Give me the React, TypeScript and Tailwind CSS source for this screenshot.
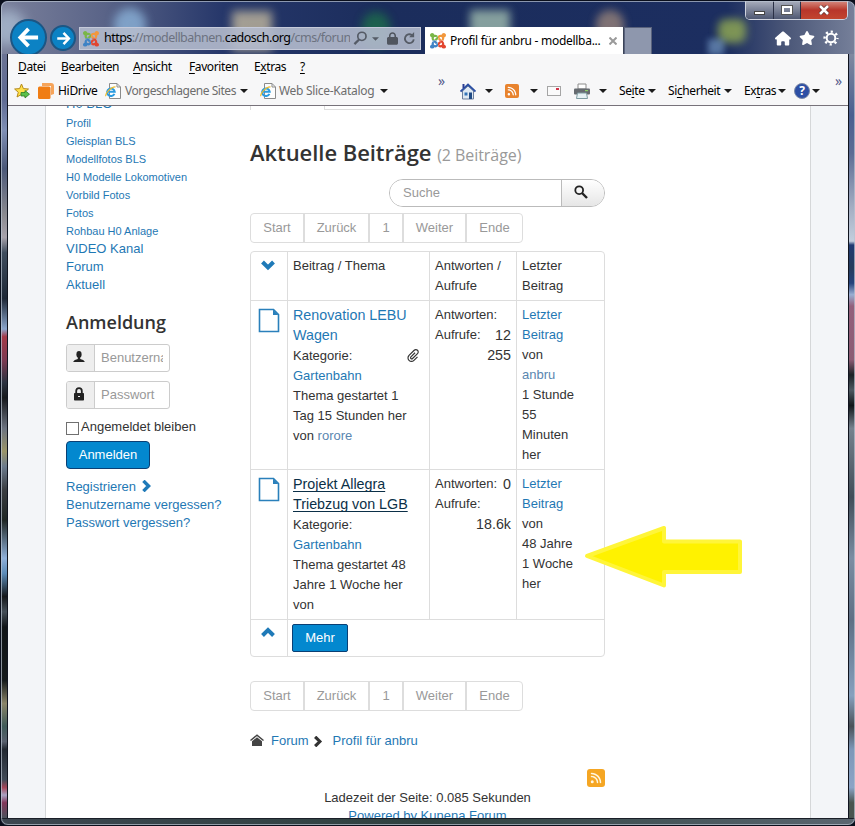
import type { ReactNode } from 'react'
import { FaLock, FaRss, FaStar, FaHouse } from 'react-icons/fa6'
import { ImAttachment } from 'react-icons/im'
import { SiJoomla } from 'react-icons/si'

const subLinks = [
  'Profil',
  'Gleisplan BLS',
  'Modellfotos BLS',
  'H0 Modelle Lokomotiven',
  'Vorbild Fotos',
  'Fotos',
  'Rohbau H0 Anlage',
]

const sideStripLeft =
  'bg-[linear-gradient(180deg,#6b7394_0%,#5f6b93_6%,#7f8fb5_10%,#4b5878_15%,#8a8a90_21%,#a7a2ab_24%,#3f4d5e_26%,#1d2736_32%,#8aa5cc_36%,#a33a48_37%,#7d3a52_40%,#2b3240_43%,#16181c_45%,#6b7280_49%,#9a9468_52%,#6b7a8c_54%,#3a3d42_57%,#1f2624_61%,#8fb0da_66%,#5b8bb8_68%,#14171a_71%,#444e58_73%,#101417_75%,#151a1b_82%,#8a8468_85%,#3f5a58_88%,#59606e_90%,#222831_91%,#414a57_95%,#a34558_96%,#a9a3c4_97%,#82375a_98%,#4a525c_100%)]'
const sideStripRight =
  'bg-[linear-gradient(180deg,#8089a0_0%,#4a5f90_8%,#5c6c94_13%,#a3adc2_20%,#c3cedd_24.5%,#203a72_25%,#263c5c_28%,#25437c_30%,#9aaed2_31.5%,#93607c_33%,#8c5c74_40%,#1b2226_42%,#4d5860_44%,#101619_46%,#76828e_49%,#414d58_58%,#7b8da3_66%,#5f6f84_74%,#86a0be_84%,#4b5259_88%,#7e97b8_91%,#8ba4c6_96%,#49544f_98%)]'

function Joomla() {
  return (
    <div className="grid h-4 w-4 shrink-0 *:col-start-1 *:row-start-1 *:h-4 *:w-4">
      <SiJoomla className="text-[#7ab648] [clip-path:polygon(0_0,50%_0,50%_50%,0_50%)]" />
      <SiJoomla className="text-[#f2973c] [clip-path:polygon(50%_0,100%_0,100%_50%,50%_50%)]" />
      <SiJoomla className="text-[#3f83c5] [clip-path:polygon(0_50%,50%_50%,50%_100%,0_100%)]" />
      <SiJoomla className="text-[#e2452f] [clip-path:polygon(50%_50%,100%_50%,100%_100%,50%_100%)]" />
    </div>
  )
}

function Arrow({ className }: { className?: string }) {
  return (
    <svg viewBox="0 0 24 24" className={className} fill="none" stroke="#fff" strokeWidth="4">
      <path d="M22 12 H4" />
      <path d="M12 3 L3.5 12 L12 21" />
    </svg>
  )
}

function Caret({ className = '' }: { className?: string }) {
  return (
    <svg viewBox="0 0 8 4" className={`h-1 w-2 shrink-0 ${className}`}>
      <path d="M0 0 H8 L4 4 Z" fill="#1b1b1b" />
    </svg>
  )
}

function IePage() {
  return (
    <svg viewBox="0 0 16 16" className="h-4 w-4 shrink-0">
      <path d="M4.5 .5 H12 L15.5 4 V15.5 H4.5 Z" fill="#fdfdfd" stroke="#8b8b8b" />
      <path d="M12 .5 V4 H15.5" fill="none" stroke="#8b8b8b" />
      <path d="M9.4 10.8 A3.8 3.8 0 1 1 9.7 8.7 H3" fill="none" stroke="#2b9be0" strokeWidth="2" />
      <path d="M1 13.2 C-.5 11 6 3.5 10.5 3.8" fill="none" stroke="#eebd2e" strokeWidth="1.2" />
    </svg>
  )
}

function Chevron({ d, className }: { d: string; className: string }) {
  return (
    <svg viewBox="0 0 14 14" className={className} fill="none" stroke="currentColor" strokeWidth="4">
      <path d={d} />
    </svg>
  )
}

function PageIcon() {
  return (
    <svg viewBox="0 0 22 25" className="h-[25px] w-[22px]">
      <path d="M1.5 1.5 H15.5 L20.5 6.5 V23.5 H1.5 Z" fill="#fff" stroke="#2a80bb" strokeWidth="1.6" />
      <path d="M15 1.5 V7 H20.5 Z" fill="#2a80bb" />
    </svg>
  )
}

function TitleBar() {
  return (
    <div className="relative flex h-[54px] shrink-0 overflow-hidden">
      <div className="absolute left-[-10px] top-[10px] h-9 w-9 rounded-full bg-[#b9cde0] opacity-60 blur-[6px]" />
      <div className="absolute left-[114px] top-[8px] h-9 w-8 rounded-full bg-[#8fb8de] opacity-75 blur-[5px]" />
      <div className="absolute left-[232px] top-[11px] h-10 w-10 bg-[#d9cba6] opacity-70 blur-[5px]" />
      <div className="absolute left-[362px] top-[12px] h-9 w-7 rounded-full bg-[#1d6a4c] opacity-85 blur-[5px]" />
      <div className="absolute left-[470px] top-[10px] h-9 w-10 bg-[#a9c6b4] opacity-75 blur-[4px]" />
      <div className="absolute left-[596px] top-[10px] h-8 w-7 rounded-full bg-[#a0897c] opacity-75 blur-[4px]" />
      <div className="absolute left-[718px] top-[19px] h-6 w-7 rounded-lg bg-[#9cb552] opacity-75 blur-[4px]" />
      <div className="absolute left-[708px] top-[39px] h-4 w-4 bg-[#7fa6cf] opacity-60 blur-[3px]" />

      <div className="relative flex grow items-end">
        <div className="ml-[10px] flex h-[35px] w-[37px] items-start overflow-hidden">
          <div className="flex h-[37px] w-[37px] shrink-0 items-center justify-center rounded-full border-2 border-[#1c5684] bg-[#0c82c4]">
            <Arrow className="h-[23px] w-[23px]" />
          </div>
        </div>
        <div className="mb-[3px] ml-[3px] flex h-[26px] w-[26px] items-center justify-center rounded-full border-2 border-[#1c5684] bg-[#0c82c4]">
          <Arrow className="h-[15px] w-[15px] rotate-180" />
        </div>
        <div className="mb-[4px] ml-[3px] flex h-[23px] w-[342px] items-center border border-[#c5cada] bg-[#b4bbcd]/90 pl-[3px]">
          <Joomla />
          <div className="ml-[5px] w-[246px] overflow-hidden whitespace-nowrap text-[12.5px] tracking-[-0.53px] text-[#6c7280]">
            <span className="text-black">https</span>://modellbahnen.<span className="text-black">cadosch.org</span>
            /cms/forun
          </div>
          <svg viewBox="0 0 16 16" className="ml-[3px] h-[15px] w-[15px] shrink-0" fill="none" stroke="#555b66" strokeWidth="1.8">
            <circle cx="9.5" cy="5.7" r="4.4" />
            <path d="M6.5 9 L1.5 14" strokeWidth="2.4" />
          </svg>
          <svg viewBox="0 0 8 4" className="ml-[4px] h-1 w-[7px] shrink-0">
            <path d="M0 0 H8 L4 4 Z" fill="#555b66" />
          </svg>
          <FaLock className="ml-[8px] h-[13px] w-[11px] shrink-0 text-[#50555f]" />
          <svg viewBox="0 0 14 14" className="ml-[5px] h-[13px] w-[13px] shrink-0" fill="none" stroke="#555b66" strokeWidth="2">
            <path d="M11.6 8 A4.8 4.8 0 1 1 9.5 3.2" />
            <path d="M12 0 V5.6 H6.6 Z" fill="#555b66" stroke="none" />
          </svg>
        </div>
        <div className="ml-[4px] flex h-[27px] w-[199px] items-center border-r border-[#3c4458] bg-white pl-[5px]">
          <Joomla />
          <span className="ml-[4px] w-[159px] whitespace-nowrap text-[12px] tracking-[-0.28px] text-black">
            Profil für anbru - modellba...
          </span>
          <svg viewBox="0 0 8 8" className="h-2 w-2" stroke="#9a9a9a" strokeWidth="2">
            <path d="M.5 .5 L7.5 7.5 M7.5 .5 L.5 7.5" />
          </svg>
        </div>
        <div className="h-[27px] w-[28px] border border-b-0 border-[#59627c] bg-[#8e97ad]" />
      </div>

      <div className="relative flex w-[110px] flex-col items-end pr-[7px]">
        <div className="mt-px flex h-[19px] w-[103px] overflow-hidden rounded-b-[5px] border border-t-0 border-[#cfd3de]">
          <div className="flex w-[28px] items-center justify-center border-r border-[#2a3045] bg-linear-to-b from-[#a9aebd] to-[#4f5872]">
            <div className="mt-[5px] h-[4px] w-[11px] border border-[#444] bg-white" />
          </div>
          <div className="flex w-[27px] items-center justify-center border-r border-[#2a3045] bg-linear-to-b from-[#a9aebd] to-[#4f5872]">
            <div className="h-[8px] w-[10px] border-2 border-white outline outline-[#555]" />
          </div>
          <div className="flex grow items-center justify-center bg-linear-to-b from-[#d58a80] via-[#b8352a] to-[#c2452f]">
            <svg viewBox="0 0 12 10" className="h-[10px] w-[12px]">
              <path d="M2 1 L10 9 M10 1 L2 9" stroke="#5b2a2a" strokeWidth="4" />
              <path d="M2 1 L10 9 M10 1 L2 9" stroke="#fff" strokeWidth="2.6" />
            </svg>
          </div>
        </div>
        <div className="mt-[10px] flex items-center gap-[8px] pr-[9px] text-white">
          <FaHouse className="h-[15px] w-[16px]" />
          <FaStar className="h-[16px] w-[16px]" />
          <svg viewBox="0 0 16 16" className="h-4 w-4" fill="none" stroke="#fff">
            <circle cx="8" cy="8" r="4.3" strokeWidth="2" />
            <circle cx="8" cy="8" r="6.4" strokeWidth="2.4" strokeDasharray="2.2 2.827" strokeDashoffset="1.1" />
          </svg>
        </div>
      </div>
    </div>
  )
}

function Label({ before = '', hot, after, className }: { before?: string; hot: string; after: string; className: string }) {
  return (
    <span className={`shrink-0 whitespace-nowrap ${className}`}>
      {before}
      <span className="underline underline-offset-2">{hot}</span>
      {after}
    </span>
  )
}

function Toolbars() {
  return (
    <div className="flex h-[52px] shrink-0 flex-col border-b border-[#77727a] bg-[#f7f7f8] text-[12px] tracking-[-0.4px] text-black">
      <div className="flex h-[25px] items-center pl-[10px]">
        <Label className="w-[43px]" hot="D" after="atei" />
        <Label className="w-[72px]" hot="B" after="earbeiten" />
        <Label className="w-[56px]" hot="A" after="nsicht" />
        <Label className="w-[65px]" hot="F" after="avoriten" />
        <Label className="w-[46px]" before="E" hot="x" after="tras" />
        <Label className="w-4" hot="?" after="" />
      </div>
      <div className="flex h-[24px] items-center pl-[6px]">
        <svg viewBox="0 0 16 16" className="h-4 w-4 shrink-0">
          <path d="M7.5 1 L9.4 5.6 L14.5 6 L10.7 9.3 L12 14 L7.5 11.4 L3 14 L4.3 9.3 L.6 6 L5.6 5.6 Z" fill="#ffe04a" stroke="#b58a1c" />
          <path d="M7 9.5 H11 V7.5 L15.5 11.2 L11 15 V13 H7 Z" fill="#5cc04a" stroke="#2c7d28" strokeWidth=".8" />
        </svg>
        <svg viewBox="0 0 16 16" className="ml-[8px] h-4 w-4 shrink-0">
          <path d="M4 0 H13 Q16 0 16 3 V11 L13 12 V3 H4 Z" fill="#f6a45a" />
          <rect x="0" y="3.5" width="12.5" height="12.5" rx="1.5" fill="#f07d14" />
        </svg>
        <span className="ml-[4px] w-[47px] shrink-0 tracking-[-0.3px]">HiDrive</span>
        <IePage />
        <span className="ml-[4px] w-[115px] shrink-0 whitespace-nowrap tracking-[-0.45px] text-[#6d6d6d]">Vorgeschlagene Sites</span>
        <Caret />
        <div className="w-[12px] shrink-0" />
        <IePage />
        <span className="ml-[3px] w-[101px] shrink-0 whitespace-nowrap tracking-[-0.3px] text-[#6d6d6d]">Web Slice-Katalog</span>
        <Caret />
        <span className="mb-[20px] ml-[50px] w-[22px] shrink-0 text-[14px] leading-none text-[#555a8a]">»</span>
        <svg viewBox="0 0 16 17" className="h-[17px] w-4 shrink-0">
          <path d="M2.5 8 V16 H13.5 V8 L8 3 Z" fill="#dfe9f3" stroke="#6d7f9d" />
          <path d="M.5 8.5 L8 1.5 L15.5 8.5" fill="none" stroke="#2b4fa3" strokeWidth="1.8" />
          <rect x="2.5" y="1" width="2" height="4" fill="#2b3e94" />
          <rect x="4.5" y="9.5" width="3" height="3" fill="#3474b8" />
          <rect x="9" y="9.5" width="3" height="6.5" fill="#1f4a84" />
        </svg>
        <Caret className="ml-[9px]" />
        <div className="ml-[12px] flex h-[14px] w-[14px] shrink-0 items-center justify-center rounded-[2px] bg-[#e8832e]">
          <FaRss className="h-[10px] w-[10px] text-white" />
        </div>
        <Caret className="ml-[11px]" />
        <div className="ml-[9px] flex h-[10px] w-[14px] shrink-0 justify-end border border-[#a5a5a5] bg-[#fafafa] pr-px pt-px">
          <div className="h-[2px] w-[3px] bg-[#d2344a]" />
        </div>
        <svg viewBox="0 0 16 16" className="ml-[13px] h-4 w-4 shrink-0">
          <path d="M4 1 H12 V6 H4 Z" fill="#fff" stroke="#8c8c8c" />
          <rect x="0" y="5.5" width="16" height="6" rx="1" fill="#666b70" />
          <rect x="11" y="7" width="3" height="1.2" fill="#8ed06a" />
          <path d="M3.5 10 H12.5 L13.5 15.5 H2.5 Z" fill="#e6f1f4" stroke="#7d9aa0" />
        </svg>
        <Caret className="ml-[9px]" />
        <Label className="ml-[12px] w-[28px]" before="Se" hot="i" after="te" />
        <Caret className="ml-px" />
        <Label className="ml-[12px] w-[55px]" before="Si" hot="c" after="herheit" />
        <Caret className="ml-px" />
        <Label className="ml-[12px] w-[33px]" before="Ex" hot="t" after="ras" />
        <Caret className="ml-px" />
        <div className="ml-[8px] flex h-4 w-4 shrink-0 items-center justify-center rounded-full border border-[#7c8aa8] bg-[#2d4fa5] text-[12px] font-bold leading-none text-white">
          ?
        </div>
        <Caret className="ml-[2px]" />
        <span className="mb-[20px] ml-[15px] shrink-0 text-[14px] leading-none text-[#555a8a]">»</span>
      </div>
    </div>
  )
}

function LoginField({ icon, placeholder, className }: { icon: ReactNode; placeholder: string; className: string }) {
  return (
    <div className={`flex h-[28px] w-[104px] overflow-hidden rounded-[3px] border border-[#ccc] ${className}`}>
      <div className="flex w-[28px] shrink-0 items-center justify-center border-r border-[#ccc] bg-[#eee] pr-1 text-[#222]">{icon}</div>
      <input
        placeholder={placeholder}
        className="mx-[6px] min-w-0 grow bg-white text-[13px] text-[#555] outline-none placeholder:text-[#999]"
      />
    </div>
  )
}

function Sidebar() {
  return (
    <div className="w-[204px] shrink-0 pl-[20px] text-[13px] leading-[18px] text-[#1f78b4]">
      <div className="mt-[-11px]">H0 BLO</div>
      {subLinks.map((label) => (
        <div key={label} className="h-[18px] whitespace-nowrap pt-px text-[11px]">
          {label}
        </div>
      ))}
      <div className="mt-px">VIDEO Kanal</div>
      <div>Forum</div>
      <div>Aktuell</div>

      <h3 className="mt-[18px] font-['Open_Sans',sans-serif] text-[18px] font-semibold leading-[20px] text-[#333]">Anmeldung</h3>
      <LoginField
        className="mt-[12px]"
        placeholder="Benutzername"
        icon={
          <svg viewBox="0 0 12 12" className="mb-[3px] h-3 w-3" fill="currentColor">
            <ellipse cx="6" cy="3.4" rx="2.6" ry="3.3" />
            <path d="M4.8 6 H7.2 V8 C9 8.8 11.6 9.2 11.8 11 H.2 C.4 9.2 3 8.8 4.8 8 Z" />
          </svg>
        }
      />
      <LoginField
        className="mt-[9px]"
        placeholder="Passwort"
        icon={
          <svg viewBox="0 0 12 14" className="mb-[3px] h-[14px] w-[12px]">
            <path d="M3.2 7 V4 Q3.2 1.2 6 1.2 Q8.8 1.2 8.8 4 V7" fill="none" stroke="currentColor" strokeWidth="1.8" />
            <rect x="1" y="6" width="10" height="7.5" rx=".8" fill="currentColor" />
            <rect x="5" y="9" width="2" height="1" fill="#eee" />
          </svg>
        }
      />
      <label className="mt-[9px] flex h-[18px] items-center text-[#333]">
        <span className="mt-[3px] mr-[2px] h-[13px] w-[13px] border border-[#707070] bg-white" />
        Angemeldet bleiben
      </label>
      <button className="mt-[5px] block h-[28px] w-[84px] rounded-[4px] border border-[#0a3f74] bg-[#0388cf] text-white">
        Anmelden
      </button>
      <div className="mt-[9px] flex items-center">
        Registrieren
        <Chevron className="mb-[2px] ml-[4px] h-[12px] w-[12px] text-[#1f7ab8]" d="M4 1 L10 7 L4 13" />
      </div>
      <div>Benutzername vergessen?</div>
      <div>Passwort vergessen?</div>
    </div>
  )
}

function Pagination() {
  const cell = 'flex items-center justify-center border-r-2 border-[#ddd]'
  return (
    <div className="flex h-[30px] w-[273px] rounded-[4px] border border-[#ddd] text-[13px] text-[#999]">
      <div className={`${cell} w-[54px]`}>Start</div>
      <div className={`${cell} w-[65px]`}>Zurück</div>
      <div className={`${cell} w-[34px]`}>1</div>
      <div className={`${cell} w-[63px]`}>Weiter</div>
      <div className="flex grow items-center justify-center">Ende</div>
    </div>
  )
}

const link = 'text-[#1f78b4]'
const user = 'text-[#5a86b0]'

function TopicTable() {
  return (
    <div className="grid w-[355px] grid-cols-[36px_142px_87px_88px] grid-rows-[48px_169px_150px_37px] overflow-hidden rounded-[4px] border border-[#ddd] text-[13px] leading-[20px] text-[#333] *:border-[#ddd]">
      <div className="pl-[10px] pt-[6px]">
        <Chevron className="h-[14px] w-[14px] text-[#1f7ab8]" d="M1.5 4 L7 9.5 L12.5 4" />
      </div>
      <div className="border-l pl-[5px] pt-[4px]">Beitrag / Thema</div>
      <div className="border-l pl-[5px] pt-[4px]">
        Antworten /<br />
        Aufrufe
      </div>
      <div className="border-l pl-[5px] pt-[4px]">
        Letzter
        <br />
        Beitrag
      </div>

      <div className="border-t pl-[7px] pt-[7px]">
        <PageIcon />
      </div>
      <div className="border-l border-t pl-[5px] pt-[4px]">
        <div className={`${link} mb-px text-[14.3px]`}>
          Renovation LEBU
          <br />
          Wagen
        </div>
        <div className="flex items-center justify-between pr-[9px]">
          Kategorie: <ImAttachment className="mb-[2px] h-[13px] w-[13px]" />
        </div>
        <div className={link}>Gartenbahn</div>
        Thema gestartet 1<br />
        Tag 15 Stunden her
        <br />
        von <span className={user}>rorore</span>
      </div>
      <div className="border-l border-t pl-[5px] pr-[5px] pt-[4px]">
        Antworten:
        <div className="flex justify-between">
          Aufrufe: <span className="text-[14.3px]">12</span>
        </div>
        <div className="text-right text-[14.3px]">255</div>
      </div>
      <div className="border-l border-t pl-[5px] pt-[4px]">
        <div className={link}>
          Letzter
          <br />
          Beitrag
        </div>
        von
        <div className={user}>anbru</div>
        1 Stunde
        <br />
        55
        <br />
        Minuten
        <br />
        her
      </div>

      <div className="border-t pl-[7px] pt-[7px]">
        <PageIcon />
      </div>
      <div className="border-l border-t pl-[5px] pt-[4px]">
        <div className="mb-px text-[14.3px] text-[#0b2f47] underline decoration-1 underline-offset-[2px] [text-decoration-skip-ink:none]">
          Projekt Allegra
          <br />
          Triebzug von LGB
        </div>
        Kategorie:
        <div className={link}>Gartenbahn</div>
        Thema gestartet 48
        <br />
        Jahre 1 Woche her
        <br />
        von
      </div>
      <div className="border-l border-t pl-[5px] pr-[5px] pt-[4px]">
        <div className="flex justify-between">
          Antworten: <span className="text-[14.3px]">0</span>
        </div>
        Aufrufe:
        <div className="text-right text-[14.3px]">18.6k</div>
      </div>
      <div className="border-l border-t pl-[5px] pt-[4px]">
        <div className={link}>
          Letzter
          <br />
          Beitrag
        </div>
        von
        <br />
        48 Jahre
        <br />
        1 Woche
        <br />
        her
      </div>

      <div className="border-t pl-[10px] pt-[6px]">
        <Chevron className="h-[14px] w-[14px] text-[#1f7ab8]" d="M1.5 9.5 L7 4 L12.5 9.5" />
      </div>
      <div className="col-span-3 border-l border-t pl-[4px] pt-[4px]">
        <button className="block h-[28px] w-[56px] rounded-[2px] border border-[#0a3f74] bg-[#0388cf] text-white">Mehr</button>
      </div>
    </div>
  )
}

function Forum() {
  return (
    <div className="w-[355px] shrink-0 text-[13px] text-[#333]">
      <div className="flex h-[4px] border-l border-[#ddd]">
        <div className="w-[73px]" />
        <div className="grow border-b border-l border-[#ddd]" />
      </div>
      <h2 className="mt-[26px] whitespace-nowrap font-['Open_Sans',sans-serif] text-[22px] font-semibold leading-[32px] tracking-[-0.05px] text-[#333]">
        Aktuelle Beiträge <span className="text-[16px] font-normal text-[#999]">(2 Beiträge)</span>
      </h2>
      <div className="ml-[139px] mt-[8px] flex h-[28px] overflow-hidden rounded-full border border-[#bbb]">
        <input placeholder="Suche" className="w-[171px] bg-white px-[13px] text-[13px] outline-none placeholder:text-[#999]" />
        <button className="flex grow items-center justify-center border-l border-[#bbb] bg-linear-to-b from-white to-[#e6e6e6] pr-[4px]">
          <svg viewBox="0 0 14 14" className="mb-[2px] h-[14px] w-[14px]" fill="none" stroke="#222">
            <circle cx="5.2" cy="5.2" r="3.9" strokeWidth="1.8" />
            <path d="M8 8 L13 13" strokeWidth="2.4" />
          </svg>
        </button>
      </div>
      <div className="mt-[6px]">
        <Pagination />
      </div>
      <div className="mt-[8px]">
        <TopicTable />
      </div>
      <div className="mt-[24px]">
        <Pagination />
      </div>
      <div className={`mt-[20px] flex h-[20px] items-center ${link}`}>
        <svg viewBox="0 0 14 12" className="mb-[3px] h-[12px] w-[14px]">
          <path d="M.5 6.5 L7 1.2 L13.5 6.5" fill="none" stroke="#444" strokeWidth="1.5" />
          <path d="M2 7.3 L7 3.2 L12 7.3 V12 H2 Z" fill="#444" />
        </svg>
        <span className="ml-[7px]">Forum</span>
        <Chevron className="ml-[3px] h-[11px] w-[11px] text-[#333]" d="M4 1 L10 7 L4 13" />
        <span className="ml-[10px]">Profil für anbru</span>
      </div>
      <div className="mt-[18px] flex justify-end">
        <div className="flex h-[18px] w-[18px] items-center justify-center rounded-[3px] bg-[#f5a623]">
          <FaRss className="h-3 w-3 text-[#fff6e0]" />
        </div>
      </div>
      <div className="mt-[2px] text-center leading-[18px]">
        Ladezeit der Seite: 0.085 Sekunden
        <div className={link}>Powered by Kunena Forum</div>
      </div>
    </div>
  )
}

export default function App() {
  return (
    <div className="h-[826px] w-[855px] overflow-hidden bg-[#0a0f1c] font-['Noto_Sans','Open_Sans',sans-serif]">
      <div className="relative flex h-[825px] w-[855px] flex-col overflow-hidden rounded-[7px] border-l border-t border-[#0a0f1c] bg-[linear-gradient(90deg,#7a809b_0%,#5a6488_12%,#26376a_26%,#1b2d5c_45%,#1c2e60_85%,#4b5778_92%,#76809a_100%)]">
        <div className="-ml-px -mt-px flex min-h-0 grow flex-col">
          <TitleBar />
          <div className="flex h-[764px]">
            <div className={`w-[8px] shrink-0 border-r border-[#10141f] ${sideStripLeft}`} />
            <div className="flex w-[840px] shrink-0 flex-col">
              <Toolbars />
              <div className="flex h-[712px] overflow-hidden bg-[#f3f5f8] pl-[37px] font-['Liberation_Sans',Arial,sans-serif]">
                <div className="flex w-[766px] shrink-0 border-x border-[#d5d7d9] bg-white">
                  <Sidebar />
                  <Forum />
                </div>
              </div>
            </div>
            <div className={`w-[7px] shrink-0 border-l border-[#10141f] ${sideStripRight}`} />
          </div>
          <div className="h-[8px] shrink-0 border-t border-[#1a1f28] bg-linear-to-r from-[#3c4650] via-[#2f4240] to-[#5a6670]" />
        </div>
        <div className="pointer-events-none absolute inset-0 rounded-[7px] border border-[#b9c3d0]/70" />
        <svg viewBox="0 0 160 64" className="absolute left-[583px] top-[523px] h-[64px] w-[160px]">
          <path
            d="M3 32 L80 4 V17.5 H156 V48 H80 V61.5 Z"
            fill="#fff200"
            stroke="#fff53a"
            strokeWidth="4"
            strokeLinejoin="round"
          />
        </svg>
      </div>
    </div>
  )
}
